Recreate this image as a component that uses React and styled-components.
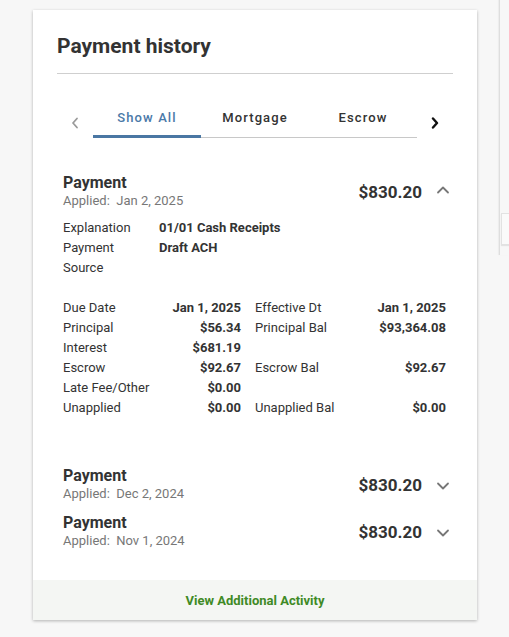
import React, { useState } from 'react';
import styled, { createGlobalStyle } from 'styled-components';

const GlobalStyle = createGlobalStyle`
  html, body {
    margin: 0;
    padding: 0;
    background: #f7f7f7;
    font-family: Roboto, "Liberation Sans", Arial, sans-serif;
    color: #333;
  }
`;

const Page = styled.div`
  display: flex;
  align-items: flex-start;
  padding: 10px 0 0 33px;
  min-height: 627px;
  box-sizing: border-box;
`;

const Card = styled.section`
  width: 444px;
  background: #fff;
  box-shadow: 0 1px 3px rgba(0, 0, 0, 0.28);
  display: flex;
  flex-direction: column;
`;

const Header = styled.div`
  margin: 0 24px;
  padding: 22px 0 12px;
  border-bottom: 1px solid #cfcfcf;

  h2 {
    margin: 0;
    font-size: 21px;
    line-height: 29px;
    font-weight: 700;
    color: #333;
  }
`;

const TabBar = styled.div`
  display: flex;
  align-items: center;
  margin: 24px 24px 0;
  height: 40px;
`;

const Arrow = styled.button`
  width: 36px;
  height: 40px;
  border: none;
  background: none;
  padding: 0;
  padding-top: 9px;
  display: flex;
  align-items: center;
  justify-content: center;
  cursor: pointer;
`;

const Tabs = styled.div`
  display: flex;
  width: 324px;
  height: 40px;
  border-bottom: 1px solid #c8c8c8;
  box-sizing: border-box;
`;

const Tab = styled.button`
  width: 108px;
  height: 40px;
  border: none;
  background: none;
  padding: 2px 0 0;
  font-family: inherit;
  font-size: 13px;
  font-weight: 500;
  letter-spacing: 1.1px;
  color: ${p => (p.$active ? '#4a79a8' : '#333')};
  border-bottom: 3px solid ${p => (p.$active ? '#4a77a3' : 'transparent')};
  margin-bottom: -1px;
  cursor: pointer;
`;

const List = styled.div`
  padding: 29px 24px 26px 30px;
`;

const Item = styled.div`
  padding: 6px 0 5px;
`;

const ItemHead = styled.div`
  display: flex;
  align-items: center;
`;

const ItemTitle = styled.div`
  flex: 1;

  strong {
    display: block;
    font-size: 16px;
    line-height: 20px;
    font-weight: 700;
    color: #333;
  }

  span {
    display: block;
    font-size: 13px;
    line-height: 16px;
    color: #777;
  }
`;

const Amount = styled.div`
  font-size: 17px;
  font-weight: 700;
  color: #333;
  margin-right: 11px;
  padding-top: 2px;
`;

const Toggle = styled.button`
  width: 20px;
  height: 24px;
  border: none;
  background: none;
  padding: 0;
  display: flex;
  align-items: center;
  justify-content: center;
  margin-top: ${p => (p.$open ? '-3px' : '3px')};
  cursor: pointer;
`;

const Details = styled.div`
  padding: 9px 0 37px;
  font-size: 13px;
  line-height: 20px;
  color: #333;
`;

const InfoRow = styled.div`
  display: flex;

  span {
    width: 96px;
  }

  b {
    font-weight: 700;
  }
`;

const Spacer = styled.div`
  height: 20px;
`;

const Grid = styled.div`
  display: grid;
  grid-template-columns: 178px 191px;
  column-gap: 14px;
  width: 383px;
`;

const Cell = styled.div`
  display: flex;
  justify-content: space-between;
  height: 20px;

  b {
    font-weight: 700;
  }
`;

const Footer = styled.div`
  height: 40px;
  background: #f4f6f3;
  display: flex;
  align-items: center;
  justify-content: center;

  a {
    font-size: 13px;
    font-weight: 700;
    color: #3f8a25;
    text-decoration: none;
    cursor: pointer;
  }
`;

const Side = styled.aside`
  flex: 1;
  margin-left: 22px;
  margin-top: -10px;
  height: 255px;
  border-left: 1px solid #dedede;
  box-shadow: -1px 0 1px rgba(0, 0, 0, 0.04);
`;

const SideBox = styled.div`
  margin-top: 213px;
  margin-left: 1px;
  height: 30px;
  background: #fafafa;
  border: 1px solid #e2e2e2;
  border-right: none;
  box-shadow: 0 1px 1px rgba(0, 0, 0, 0.08);
`;

const Chevron = ({ dir = 'down', color = '#777', width = 1.8 }) => (
  <svg width="14" height="14" viewBox="0 0 14 14" fill="none">
    <polyline
      points={dir === 'up' ? '2,9.5 7,4.5 12,9.5' : '2,4.5 7,9.5 12,4.5'}
      stroke={color}
      strokeWidth={width}
      strokeLinecap="round"
      strokeLinejoin="round"
    />
  </svg>
);

const SideChevron = ({ dir, color, width }) => (
  <svg width="10" height="12" viewBox="0 0 10 12" fill="none">
    <polyline
      points={dir === 'left' ? '7,1.5 3,6 7,10.5' : '3,1.5 7,6 3,10.5'}
      stroke={color}
      strokeWidth={width}
      strokeLinecap="round"
      strokeLinejoin="round"
    />
  </svg>
);

const payments = [
  { applied: 'Jan 2, 2025', amount: '$830.20', open: true },
  { applied: 'Dec 2, 2024', amount: '$830.20' },
  { applied: 'Nov 1, 2024', amount: '$830.20' },
];

const grid = [
  ['Due Date', 'Jan 1, 2025', 'Effective Dt', 'Jan 1, 2025'],
  ['Principal', '$56.34', 'Principal Bal', '$93,364.08'],
  ['Interest', '$681.19', '', ''],
  ['Escrow', '$92.67', 'Escrow Bal', '$92.67'],
  ['Late Fee/Other', '$0.00', '', ''],
  ['Unapplied', '$0.00', 'Unapplied Bal', '$0.00'],
];

export default function App() {
  const [tab, setTab] = useState('Show All');

  return (
    <>
      <GlobalStyle />
      <Page>
        <Card>
          <Header>
            <h2>Payment history</h2>
          </Header>

          <TabBar>
            <Arrow aria-label="previous">
              <SideChevron dir="left" color="#9a9a9a" width={1.8} />
            </Arrow>
            <Tabs>
              {['Show All', 'Mortgage', 'Escrow'].map(t => (
                <Tab key={t} $active={tab === t} onClick={() => setTab(t)}>
                  {t}
                </Tab>
              ))}
            </Tabs>
            <Arrow aria-label="next">
              <SideChevron dir="right" color="#111" width={2.4} />
            </Arrow>
          </TabBar>

          <List>
            {payments.map(p => (
              <Item key={p.applied}>
                <ItemHead>
                  <ItemTitle>
                    <strong>Payment</strong>
                    <span>Applied:&nbsp; {p.applied}</span>
                  </ItemTitle>
                  <Amount>{p.amount}</Amount>
                  <Toggle $open={p.open}>
                    <Chevron dir={p.open ? 'up' : 'down'} />
                  </Toggle>
                </ItemHead>
                {p.open && (
                  <Details>
                    <InfoRow>
                      <span>Explanation</span>
                      <b>01/01 Cash Receipts</b>
                    </InfoRow>
                    <InfoRow>
                      <span>Payment</span>
                      <b>Draft ACH</b>
                    </InfoRow>
                    <InfoRow>
                      <span>Source</span>
                    </InfoRow>
                    <Spacer />
                    <Grid>
                      {grid.map(row => (
                        <React.Fragment key={row[0]}>
                          <Cell>
                            <span>{row[0]}</span>
                            <b>{row[1]}</b>
                          </Cell>
                          <Cell>
                            <span>{row[2]}</span>
                            <b>{row[3]}</b>
                          </Cell>
                        </React.Fragment>
                      ))}
                    </Grid>
                  </Details>
                )}
              </Item>
            ))}
          </List>

          <Footer>
            <a>View Additional Activity</a>
          </Footer>
        </Card>
        <Side>
          <SideBox />
        </Side>
      </Page>
    </>
  );
}
